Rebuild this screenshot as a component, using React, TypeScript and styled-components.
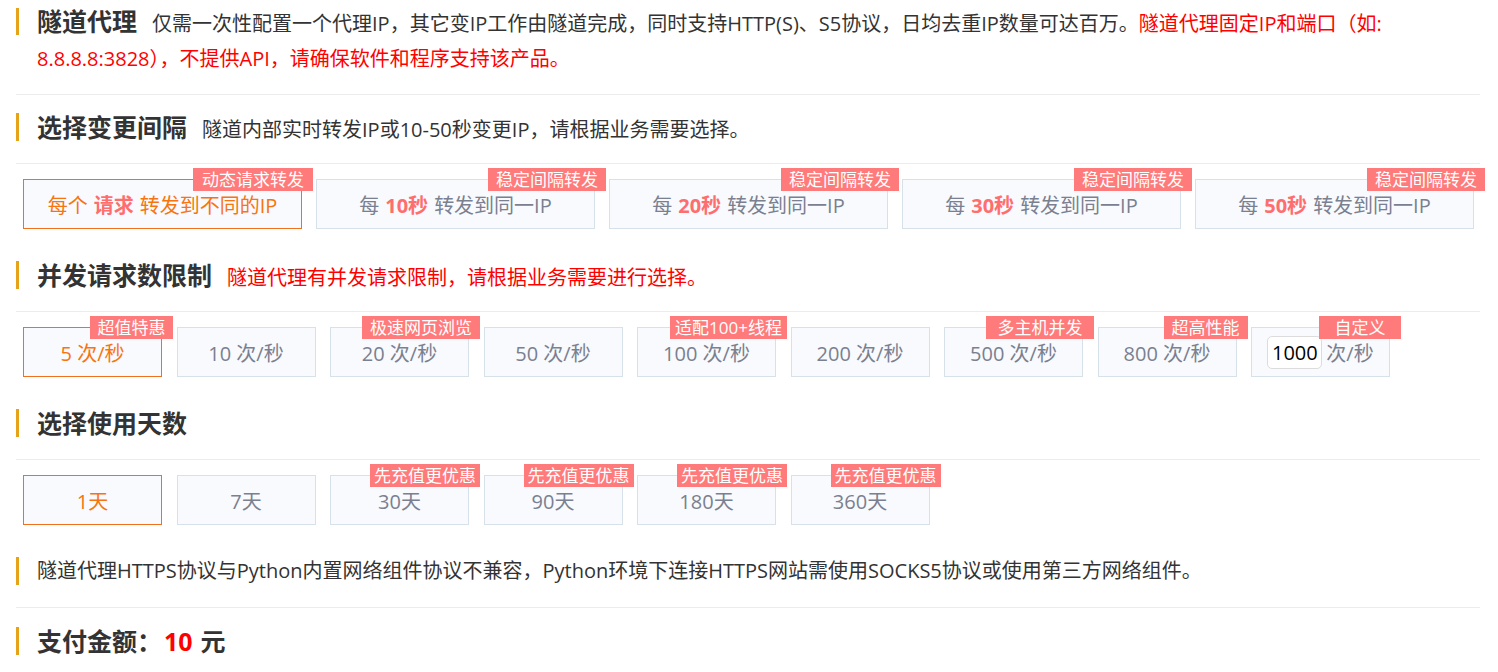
import React, { useState } from 'react';
import styled, { createGlobalStyle, css } from 'styled-components';

const GlobalStyle = createGlobalStyle`
  html, body {
    margin: 0;
    padding: 0;
    background: #fff;
  }
  body {
    font-family: "Open Sans", "Noto Sans CJK SC", sans-serif;
    color: #333;
  }
`;

const Page = styled.div`
  padding: 0 18px 0 16px;
`;

// section heading with the golden bar on the left
const Block = styled.div<{ $top?: number; $line?: boolean }>`
  position: relative;
  display: flex;
  align-items: baseline;
  height: 28px;
  padding: ${(p) => p.$top ?? 18}px 0 22px 21px;
  border-bottom: ${(p) => (p.$line === false ? 'none' : '1px solid #ececec')};
  font-size: 20px;
  line-height: 28px;
  white-space: nowrap;

  &::before {
    content: '';
    position: absolute;
    left: 0;
    top: ${(p) => p.$top ?? 18}px;
    width: 3px;
    height: 28px;
    background: #e6a219;
  }
`;

const IntroBlock = styled.div`
  position: relative;
  padding: 4px 0 18px 21px;
  border-bottom: 1px solid #ececec;
  font-size: 20px;
  line-height: 35px;

  &::before {
    content: '';
    position: absolute;
    left: 0;
    top: 8px;
    width: 3px;
    height: 27px;
    background: #e6a219;
  }
`;

const Title = styled.span`
  font-size: 25px;
  font-weight: 700;
  color: #333;
  margin-right: 15px;
`;

const Desc = styled.span<{ $red?: boolean }>`
  font-size: 20px;
  color: ${(p) => (p.$red ? '#ff0000' : '#333')};
`;

const Red = styled.span`
  color: #ff0000;
`;

const Options = styled.div<{ $w: number; $gap: number }>`
  display: grid;
  grid-template-columns: repeat(auto-fill, ${(p) => p.$w}px);
  column-gap: ${(p) => p.$gap}px;
  padding: 15px 0 14px 7px;
`;

const Card = styled.div<{ $active?: boolean }>`
  position: relative;
  box-sizing: border-box;
  height: 50px;
  display: flex;
  align-items: center;
  justify-content: center;
  background: #f8fafd;
  border: 1px solid #d7e1ea;
  font-size: 20px;
  color: #7a8090;
  white-space: nowrap;
  cursor: pointer;

  ${(p) =>
    p.$active &&
    css`
      border-color: #f0701e;
      color: #f7740f;
    `}
`;

const Strong = styled.b`
  color: #ff6e6e;
  font-weight: 700;
  margin: 0 6px;
`;

const Badge = styled.span<{ $w?: number }>`
  position: absolute;
  top: -12px;
  right: -12px;
  height: 23px;
  line-height: 23px;
  min-width: ${(p) => p.$w || 82}px;
  box-sizing: border-box;
  padding: 0 4px;
  text-align: center;
  background: #ff7a7a;
  color: #fff;
  font-size: 17px;
`;

const Input = styled.input`
  box-sizing: border-box;
  width: 55px;
  height: 33px;
  margin-right: 4px;
  border: 1px solid #dcdcdc;
  border-radius: 5px;
  background: #fff;
  font-family: inherit;
  font-size: 20px;
  color: #000;
  text-align: center;
  padding: 0;
  outline: none;
`;

const Amount = styled.span`
  color: #ff0000;
  margin: 0 8px 0 2px;
`;

const intervals = [
  { n: '10秒', tag: '稳定间隔转发' },
  { n: '20秒', tag: '稳定间隔转发' },
  { n: '30秒', tag: '稳定间隔转发' },
  { n: '50秒', tag: '稳定间隔转发' },
];

const counts: { n: number; tag?: string; w?: number }[] = [
  { n: 5, tag: '超值特惠', w: 83 },
  { n: 10 },
  { n: 20, tag: '极速网页浏览', w: 118 },
  { n: 50 },
  { n: 100, tag: '适配100+线程', w: 117 },
  { n: 200 },
  { n: 500, tag: '多主机并发', w: 108 },
  { n: 800, tag: '超高性能', w: 84 },
];

const days: { n: number; tag?: string }[] = [
  { n: 1 },
  { n: 7 },
  { n: 30, tag: '先充值更优惠' },
  { n: 90, tag: '先充值更优惠' },
  { n: 180, tag: '先充值更优惠' },
  { n: 360, tag: '先充值更优惠' },
];

const App = () => {
  const [interval, setInterval] = useState(0);
  const [count, setCount] = useState(0);
  const [day, setDay] = useState(0);
  const [custom, setCustom] = useState('1000');

  return (
    <Page>
      <GlobalStyle />
      <IntroBlock>
        <Title>隧道代理</Title>
        <Desc>
          仅需一次性配置一个代理IP，其它变IP工作由隧道完成，同时支持HTTP(S)、S5协议，日均去重IP数量可达百万。
          <Red>
            隧道代理固定IP和端口（如:
            <br />
            8.8.8.8:3828），不提供API，请确保软件和程序支持该产品。
          </Red>
        </Desc>
      </IntroBlock>

      <Block>
        <Title>选择变更间隔</Title>
        <Desc>隧道内部实时转发IP或10-50秒变更IP，请根据业务需要选择。</Desc>
      </Block>
      <Options $w={279} $gap={14}>
        <Card $active={interval === 0} onClick={() => setInterval(0)}>
          每个<Strong>请求</Strong>转发到不同的IP
          <Badge $w={120}>动态请求转发</Badge>
        </Card>
        {intervals.map((it, i) => (
          <Card key={it.n} $active={interval === i + 1} onClick={() => setInterval(i + 1)}>
            每<Strong>{it.n}</Strong>转发到同一IP
            <Badge $w={118}>{it.tag}</Badge>
          </Card>
        ))}
      </Options>

      <Block>
        <Title>并发请求数限制</Title>
        <Desc $red>隧道代理有并发请求限制，请根据业务需要进行选择。</Desc>
      </Block>
      <Options $w={139} $gap={14.5}>
        {counts.map((c, i) => (
          <Card key={c.n} $active={count === i} onClick={() => setCount(i)}>
            {c.n} 次/秒
            {c.tag && <Badge $w={c.w}>{c.tag}</Badge>}
          </Card>
        ))}
        <Card $active={count === counts.length} onClick={() => setCount(counts.length)}>
          <Input value={custom} onChange={(e) => setCustom(e.target.value)} />
          次/秒
          <Badge $w={82}>自定义</Badge>
        </Card>
      </Options>

      <Block>
        <Title>选择使用天数</Title>
      </Block>
      <Options $w={139} $gap={14.5}>
        {days.map((d, i) => (
          <Card key={d.n} $active={day === i} onClick={() => setDay(i)}>
            {d.n}天
            {d.tag && <Badge $w={110}>{d.tag}</Badge>}
          </Card>
        ))}
      </Options>

      <Block>
        <Desc>
          隧道代理HTTPS协议与Python内置网络组件协议不兼容，Python环境下连接HTTPS网站需使用SOCKS5协议或使用第三方网络组件。
        </Desc>
      </Block>

      <Block $top={19} $line={false}>
        <Title>
          支付金额：<Amount>10</Amount>元
        </Title>
      </Block>
    </Page>
  );
};

export default App;
